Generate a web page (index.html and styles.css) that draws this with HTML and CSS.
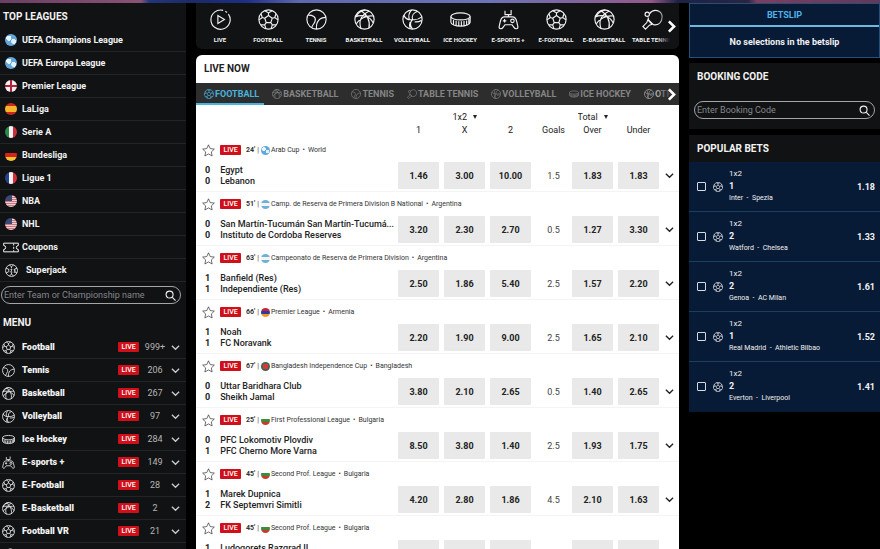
FILE: index.html
```html
<!doctype html>
<html lang="en">
<head>
	<meta charset="UTF-8">
	<meta name="viewport" content="width=device-width, initial-scale=1">
	<title>Live betting</title>
	<link rel="stylesheet" href="styles.css">
</head>
<body>
	<!-- icon set -->
	<svg class="sprite" aria-hidden="true">
		<symbol id="i-play" viewBox="0 0 24 24"><path d="M15 1.600a11 11 0 1 0 6 4.200M17.500 2.500a11 11 0 0 1 2 1.500"/><path d="M9 7.500v9l7.500-4.500z"/></symbol>
		<symbol id="i-football" viewBox="0 0 24 24"><circle cx="12" cy="12" r="11"/><path d="M12 7.500l4.300 3.100-1.700 5H9.400l-1.700-5zM12 7.500v-3M16.300 10.600l2.800-.9M14.600 15.600l1.800 2.500M9.400 15.600l-1.800 2.500M7.700 10.600l-2.800-.9M8 2l4 2.500L16 2M20.600 5.500l-1.500 4.200 3.700 2.700M20.800 18.200l-4.400-.1-1.500 4.300M9.100 22.400l-1.500-4.300-4.400.1M1.200 12.400l3.700-2.700-1.500-4.200"/></symbol>
		<symbol id="i-tennis" viewBox="0 0 24 24"><circle cx="12" cy="12" r="11"/><path d="M2.500 7C8 7 11.500 9 10.500 13.500 9.800 17 7 18 6.500 21.500M22.800 9.500C16 9.500 11 14 12 23"/></symbol>
		<symbol id="i-basketball" viewBox="0 0 24 24"><circle cx="12" cy="12" r="11"/><path d="M1.500 9C9 6 18 8 22 16M8 2c7 4 11 12 9 20M17 2.500C8 7 5 14 8 22.300M2.500 17C6 11 14 7 22 8M13 1c-5 1-9 4-11 8"/></symbol>
		<symbol id="i-volleyball" viewBox="0 0 24 24"><circle cx="12" cy="12" r="11"/><path d="M12 12c-1-4 1-8 6-9.500M12 12c4 1 8-1 10.800-3M12 12c-3 3-3 7 0 11M12 12C8 13 4 11 2 7M8.500 12.500C7 8 8 4 11 1M14.500 14.500c3 1 5 0 8-1.500M9.300 15c-1 2-1 4 0 7.500"/></symbol>
		<symbol id="i-hockey" viewBox="0 0 24 24"><ellipse cx="12" cy="8.500" rx="11" ry="4"/><path d="M1 8.500v6.500c0 2.500 5 4.500 11 4.500s11-2 11-4.500V8.500M4 12.500v5M7 13.500v5M10 14v5M13 14v5M16 13.700v5M19 13v5M21.500 11.500v5.500"/></symbol>
		<symbol id="i-esports" viewBox="0 0 24 24"><path d="M7.500 9h9c3 0 4 1.500 4.800 5l1.400 6c.5 3-3 3.500-4.500 1L16 18H8l-2.200 3c-1.500 2.500-5 2-4.500-1l1.400-6C3.500 10.500 4.500 9 7.500 9zM12 9V6.500H8V2M12 6.500h3V1M7.500 11.500v4M5.500 13.500h4"/><circle cx="16.500" cy="13.500" r="2"/></symbol>
		<symbol id="i-tabletennis" viewBox="0 0 24 24"><path d="M8.500 5.500C13-1 23 1 23 9.500c0 6-4.500 9.500-10 8.500l-5-5M6.500 12.500l5 5-3 1L4 23l-3-3 4.500-4.500zM8 13c-1-1-1-2-.800-3.500"/><circle cx="6" cy="6" r="2.500"/></symbol>
		<symbol id="i-jack" viewBox="0 0 24 24"><circle cx="12" cy="12" r="11"/><path d="M8 2l4 3 4-3M8 22l4-3 4 3M12 5v3M12 16v3M2 8l4 1M22 8l-4 1M2 16l4-1M22 16l-4-1M5.500 10.500L7 9.500v5.500M10 10h3l-2.500 5H13.500M16 10h2.500v2.500H16.500M18.500 12.500V15H16"/></symbol>
		<symbol id="i-ticket" viewBox="0 0 24 16"><path d="M1 1.500h22v3.500a3 3 0 0 0 0 6v3.500H1V11a3 3 0 0 0 0-6zM16 2v3M16 7v3M16 12v2"/></symbol>
		<symbol id="i-star" viewBox="0 0 24 24"><path d="M12 1.500l3.200 7 7.600.9-5.600 5.200 1.500 7.500L12 18.300l-6.700 3.800 1.500-7.500L1.200 9.400l7.600-.9z"/></symbol>
		<symbol id="i-down" viewBox="0 0 10 10"><path d="M1 3l4 4 4-4"/></symbol>
		<symbol id="i-right" viewBox="0 0 10 10"><path d="M3 1l4 4-4 4"/></symbol>
		<symbol id="i-search" viewBox="0 0 12 12"><circle cx="5" cy="5" r="3.800"/><path d="M8 8l3.500 3.500"/></symbol>
	</svg>

	<div class="banner"></div>
	<div class="page">

		<aside class="sidebar">
			<h2>TOP LEAGUES</h2>
			<ul class="leagues">
				<li><a href="#"><i class="flag world"></i>UEFA Champions League</a></li>
				<li><a href="#"><i class="flag world"></i>UEFA Europa League</a></li>
				<li><a href="#"><i class="flag england"></i>Premier League</a></li>
				<li><a href="#"><i class="flag spain"></i>LaLiga</a></li>
				<li><a href="#"><i class="flag italy"></i>Serie A</a></li>
				<li><a href="#"><i class="flag germany"></i>Bundesliga</a></li>
				<li><a href="#"><i class="flag france"></i>Ligue 1</a></li>
				<li><a href="#"><i class="flag usa"></i>NBA</a></li>
				<li><a href="#"><i class="flag usa"></i>NHL</a></li>
				<li class="coupons"><a href="#"><svg class="icon"><use href="#i-ticket"/></svg>Coupons</a></li>
				<li class="superjack"><a href="#"><svg class="icon"><use href="#i-jack"/></svg>Superjack</a></li>
			</ul>
			<form class="search">
				<input type="text" aria-label="Team or championship" placeholder="Enter Team or Championship name">
				<button type="button" aria-label="Search"><svg class="icon"><use href="#i-search"/></svg></button>
			</form>
			<h2 class="menu-title">MENU</h2>
			<ul class="menu">
				<li><a href="#"><svg class="icon"><use href="#i-football"/></svg><b>Football</b><span class="live">LIVE</span><span class="count">999+</span><svg class="down"><use href="#i-down"/></svg></a></li>
				<li><a href="#"><svg class="icon"><use href="#i-tennis"/></svg><b>Tennis</b><span class="live">LIVE</span><span class="count">206</span><svg class="down"><use href="#i-down"/></svg></a></li>
				<li><a href="#"><svg class="icon"><use href="#i-basketball"/></svg><b>Basketball</b><span class="live">LIVE</span><span class="count">267</span><svg class="down"><use href="#i-down"/></svg></a></li>
				<li><a href="#"><svg class="icon"><use href="#i-volleyball"/></svg><b>Volleyball</b><span class="live">LIVE</span><span class="count">97</span><svg class="down"><use href="#i-down"/></svg></a></li>
				<li><a href="#"><svg class="icon"><use href="#i-hockey"/></svg><b>Ice Hockey</b><span class="live">LIVE</span><span class="count">284</span><svg class="down"><use href="#i-down"/></svg></a></li>
				<li><a href="#"><svg class="icon"><use href="#i-esports"/></svg><b>E-sports +</b><span class="live">LIVE</span><span class="count">149</span><svg class="down"><use href="#i-down"/></svg></a></li>
				<li><a href="#"><svg class="icon"><use href="#i-football"/></svg><b>E-Football</b><span class="live">LIVE</span><span class="count">28</span><svg class="down"><use href="#i-down"/></svg></a></li>
				<li><a href="#"><svg class="icon"><use href="#i-basketball"/></svg><b>E-Basketball</b><span class="live">LIVE</span><span class="count">2</span><svg class="down"><use href="#i-down"/></svg></a></li>
				<li><a href="#"><svg class="icon"><use href="#i-football"/></svg><b>Football VR</b><span class="live">LIVE</span><span class="count">21</span><svg class="down"><use href="#i-down"/></svg></a></li>
				<li><a href="#"><svg class="icon"><use href="#i-tabletennis"/></svg><b>Table Tennis</b><span class="live">LIVE</span><span class="count">35</span><svg class="down"><use href="#i-down"/></svg></a></li>
			</ul>
		</aside>

		<main class="center">
			<nav class="sports">
				<a href="#"><svg class="icon"><use href="#i-play"/></svg>LIVE</a>
				<a href="#"><svg class="icon"><use href="#i-football"/></svg>FOOTBALL</a>
				<a href="#"><svg class="icon"><use href="#i-tennis"/></svg>TENNIS</a>
				<a href="#"><svg class="icon"><use href="#i-basketball"/></svg>BASKETBALL</a>
				<a href="#"><svg class="icon"><use href="#i-volleyball"/></svg>VOLLEYBALL</a>
				<a href="#"><svg class="icon"><use href="#i-hockey"/></svg>ICE HOCKEY</a>
				<a href="#"><svg class="icon"><use href="#i-esports"/></svg>E-SPORTS +</a>
				<a href="#"><svg class="icon"><use href="#i-football"/></svg>E-FOOTBALL</a>
				<a href="#"><svg class="icon"><use href="#i-basketball"/></svg>E-BASKETBALL</a>
				<a href="#"><svg class="icon"><use href="#i-tabletennis"/></svg>TABLE TENNIS</a>
				<button type="button" class="next" aria-label="More sports"><svg><use href="#i-right"/></svg></button>
			</nav>

			<section class="board">
				<h1>LIVE NOW</h1>
				<nav class="tabs">
					<a href="#" class="active"><svg class="icon"><use href="#i-football"/></svg>FOOTBALL</a>
					<a href="#"><svg class="icon"><use href="#i-basketball"/></svg>BASKETBALL</a>
					<a href="#"><svg class="icon"><use href="#i-tennis"/></svg>TENNIS</a>
					<a href="#"><svg class="icon"><use href="#i-tabletennis"/></svg>TABLE TENNIS</a>
					<a href="#"><svg class="icon"><use href="#i-volleyball"/></svg>VOLLEYBALL</a>
					<a href="#"><svg class="icon"><use href="#i-hockey"/></svg>ICE HOCKEY</a>
					<a href="#" class="others"><svg class="icon"><use href="#i-volleyball"/></svg>OTHERS</a>
					<button type="button" class="next" aria-label="More tabs"><svg><use href="#i-right"/></svg></button>
				</nav>

				<div class="heads">
					<label class="pick main-pick"><select aria-label="Main market"><option>1x2</option></select></label>
					<label class="pick total-pick"><select aria-label="Goals market"><option>Total</option></select></label>
					<span></span><span>1</span><span>X</span><span>2</span><span class="goals">Goals</span><span>Over</span><span>Under</span>
				</div>

				<article class="match">
					<div class="info"><svg class="star"><use href="#i-star"/></svg><span class="live">LIVE</span><b>24'</b><span class="bar">|</span><i class="flag world"></i><span>Arab Cup</span><span class="dot">•</span><span>World</span></div>
					<div class="teams"><p><b>0</b><span>Egypt</span></p><p><b>0</b><span>Lebanon</span></p></div>
					<button type="button">1.46</button><button type="button">3.00</button><button type="button">10.00</button><span class="goals">1.5</span><button type="button">1.83</button><button type="button">1.83</button>
					<svg class="down"><use href="#i-down"/></svg>
				</article>
				<article class="match">
					<div class="info"><svg class="star"><use href="#i-star"/></svg><span class="live">LIVE</span><b>51'</b><span class="bar">|</span><i class="flag argentina"></i><span>Camp. de Reserva de Primera Division B National</span><span class="dot">•</span><span>Argentina</span></div>
					<div class="teams"><p><b>0</b><span>San Martín-Tucumán San Martín-Tucumá...</span></p><p><b>0</b><span>Instituto de Cordoba Reserves</span></p></div>
					<button type="button">3.20</button><button type="button">2.30</button><button type="button">2.70</button><span class="goals">0.5</span><button type="button">1.27</button><button type="button">3.30</button>
					<svg class="down"><use href="#i-down"/></svg>
				</article>
				<article class="match">
					<div class="info"><svg class="star"><use href="#i-star"/></svg><span class="live">LIVE</span><b>63'</b><span class="bar">|</span><i class="flag argentina"></i><span>Campeonato de Reserva de Primera Division</span><span class="dot">•</span><span>Argentina</span></div>
					<div class="teams"><p><b>1</b><span>Banfield (Res)</span></p><p><b>1</b><span>Independiente (Res)</span></p></div>
					<button type="button">2.50</button><button type="button">1.86</button><button type="button">5.40</button><span class="goals">2.5</span><button type="button">1.57</button><button type="button">2.20</button>
					<svg class="down"><use href="#i-down"/></svg>
				</article>
				<article class="match">
					<div class="info"><svg class="star"><use href="#i-star"/></svg><span class="live">LIVE</span><b>66'</b><span class="bar">|</span><i class="flag armenia"></i><span>Premier League</span><span class="dot">•</span><span>Armenia</span></div>
					<div class="teams"><p><b>1</b><span>Noah</span></p><p><b>1</b><span>FC Noravank</span></p></div>
					<button type="button">2.20</button><button type="button">1.90</button><button type="button">9.00</button><span class="goals">2.5</span><button type="button">1.65</button><button type="button">2.10</button>
					<svg class="down"><use href="#i-down"/></svg>
				</article>
				<article class="match">
					<div class="info"><svg class="star"><use href="#i-star"/></svg><span class="live">LIVE</span><b>67'</b><span class="bar">|</span><i class="flag bangladesh"></i><span>Bangladesh Independence Cup</span><span class="dot">•</span><span>Bangladesh</span></div>
					<div class="teams"><p><b>0</b><span>Uttar Baridhara Club</span></p><p><b>0</b><span>Sheikh Jamal</span></p></div>
					<button type="button">3.80</button><button type="button">2.10</button><button type="button">2.65</button><span class="goals">0.5</span><button type="button">1.40</button><button type="button">2.65</button>
					<svg class="down"><use href="#i-down"/></svg>
				</article>
				<article class="match">
					<div class="info"><svg class="star"><use href="#i-star"/></svg><span class="live">LIVE</span><b>25'</b><span class="bar">|</span><i class="flag bulgaria"></i><span>First Professional League</span><span class="dot">•</span><span>Bulgaria</span></div>
					<div class="teams"><p><b>0</b><span>PFC Lokomotiv Plovdiv</span></p><p><b>1</b><span>PFC Cherno More Varna</span></p></div>
					<button type="button">8.50</button><button type="button">3.80</button><button type="button">1.40</button><span class="goals">2.5</span><button type="button">1.93</button><button type="button">1.75</button>
					<svg class="down"><use href="#i-down"/></svg>
				</article>
				<article class="match">
					<div class="info"><svg class="star"><use href="#i-star"/></svg><span class="live">LIVE</span><b>45'</b><span class="bar">|</span><i class="flag bulgaria"></i><span>Second Prof. League</span><span class="dot">•</span><span>Bulgaria</span></div>
					<div class="teams"><p><b>1</b><span>Marek Dupnica</span></p><p><b>2</b><span>FK Septemvri Simitli</span></p></div>
					<button type="button">4.20</button><button type="button">2.80</button><button type="button">1.86</button><span class="goals">4.5</span><button type="button">2.10</button><button type="button">1.63</button>
					<svg class="down"><use href="#i-down"/></svg>
				</article>
				<article class="match">
					<div class="info"><svg class="star"><use href="#i-star"/></svg><span class="live">LIVE</span><b>45'</b><span class="bar">|</span><i class="flag bulgaria"></i><span>Second Prof. League</span><span class="dot">•</span><span>Bulgaria</span></div>
					<div class="teams"><p><b>1</b><span>Ludogorets Razgrad II</span></p><p><b>1</b><span>Litex</span></p></div>
					<button type="button">3.10</button><button type="button">2.25</button><button type="button">2.45</button><span class="goals">2.5</span><button type="button">2.00</button><button type="button">1.77</button>
					<svg class="down"><use href="#i-down"/></svg>
				</article>
			</section>
		</main>

		<aside class="right">
			<section class="betslip">
				<h2>BETSLIP</h2>
				<p>No selections in the betslip</p>
			</section>
			<section class="booking">
				<h2>BOOKING CODE</h2>
				<form class="search">
					<input type="text" aria-label="Booking code" placeholder="Enter Booking Code">
					<button type="button" aria-label="Search"><svg class="icon"><use href="#i-search"/></svg></button>
				</form>
			</section>
			<section class="popular">
				<h2>POPULAR BETS</h2>
				<label class="bet"><input type="checkbox"><svg class="icon"><use href="#i-football"/></svg><span class="what"><span>1x2</span><b>1</b><small>Inter &nbsp;-&nbsp; Spezia</small></span><strong>1.18</strong></label>
				<label class="bet"><input type="checkbox"><svg class="icon"><use href="#i-football"/></svg><span class="what"><span>1x2</span><b>2</b><small>Watford &nbsp;-&nbsp; Chelsea</small></span><strong>1.33</strong></label>
				<label class="bet"><input type="checkbox"><svg class="icon"><use href="#i-football"/></svg><span class="what"><span>1x2</span><b>2</b><small>Genoa &nbsp;-&nbsp; AC Milan</small></span><strong>1.61</strong></label>
				<label class="bet"><input type="checkbox"><svg class="icon"><use href="#i-football"/></svg><span class="what"><span>1x2</span><b>1</b><small>Real Madrid &nbsp;-&nbsp; Athletic Bilbao</small></span><strong>1.52</strong></label>
				<label class="bet"><input type="checkbox"><svg class="icon"><use href="#i-football"/></svg><span class="what"><span>1x2</span><b>2</b><small>Everton &nbsp;-&nbsp; Liverpool</small></span><strong>1.41</strong></label>
			</section>
		</aside>
	</div>
</body>
</html>
```
FILE: styles.css
```css
*{box-sizing:border-box;}
body{margin:0; height:100vh; overflow:hidden; display:flex; flex-direction:column; background:#000; color:#f2f2f2; font:9px/12px Roboto,"Liberation Sans",sans-serif;}
h1,h2,p,ul,form{margin:0; padding:0; list-style:none;}
h1,h2{font-size:10px; line-height:14px; font-weight:700;}
a{color:inherit; text-decoration:none;}
button,input,select{font:inherit; color:inherit; border:0; padding:0; margin:0; background:none;}
button{cursor:pointer;}
svg{fill:none; stroke:currentColor; stroke-width:2; flex:none; display:block;}
.sprite{position:absolute; width:0; height:0;}

.banner{flex:none; height:3px; background:linear-gradient(90deg,#6b3f63 0,#8a5275 16%,#22357c 17%,#1c2a66 22%,#1d2f86 28%,#5f68ae 34%,#6b74b8 55%,#94588a 74%,#1d2347 77%,#2b2440 85%,#7b3f60 86%,#63385a 100%);}
.page{flex:1; min-height:0; display:grid; grid-template-columns:186px minmax(0,1fr) 191px; overflow:hidden;}

/* small shared parts */
.icon{width:13px; height:13px; stroke-width:1.500;}
.down{width:9px; height:9px; stroke-width:1.500;}
.live{background:#cf101b; color:#fff; border-radius:1px; font-size:7px; line-height:10px; height:10px; width:21px; text-align:center; font-weight:500; flex:none;}
.flag{width:12px; height:12px; border-radius:50%; flex:none; background:#ccc;}
.world{background:radial-gradient(circle at 32% 35%,#eaf4fb 0 22%,transparent 24%),radial-gradient(circle at 72% 62%,#e3f0f9 0 20%,transparent 22%),#62a8dc;}
.england{background:linear-gradient(90deg,transparent 40%,#b5213c 40% 60%,transparent 60%),linear-gradient(#f1eff0 40%,#b5213c 40% 60%,#f1eff0 60%);}
.spain{background:linear-gradient(#c8281f 26%,#f5b52a 26% 74%,#c8281f 74%);}
.italy{background:linear-gradient(90deg,#2b8a4a 33%,#f3f3f3 33% 66%,#c5303c 66%);}
.germany{background:linear-gradient(#111 33%,#d3231c 33% 66%,#f7c331 66%);}
.france{background:linear-gradient(90deg,#27408f 33%,#f3f3f3 33% 66%,#d42e3f 66%);}
.usa{background:linear-gradient(#3a4a78,#3a4a78) 0 0/60% 50% no-repeat,repeating-linear-gradient(#d2737c 0 1px,#e8d5d8 1px 2px);}
.argentina{background:linear-gradient(#6fb0d8 33%,#f4f4f4 33% 66%,#6fb0d8 66%);}
.armenia{background:linear-gradient(#cc2033 33%,#2a3ba5 33% 66%,#ee9a2a 66%);}
.bangladesh{background:radial-gradient(circle,#d8393c 45%,#2f6a50 50%);}
.bulgaria{background:linear-gradient(#fff 33%,#3f8a3c 33% 66%,#c93a2c 66%);}

/* left column */
.sidebar{background:#111214; overflow:hidden;}
.sidebar h2{padding:7px 3px 5px;}
.leagues a,.menu a{display:flex; align-items:center; height:23px; border-bottom:1px solid #222427; font-weight:700;}
.leagues a{padding-left:5px; gap:5px;}
.leagues .coupons a{padding-left:3px; gap:3px;}
.coupons .icon{width:16px; height:11px;}
.leagues .superjack a{gap:8px;}
.search{display:flex; align-items:center; height:18px; border:1px solid #a5a5a5; border-radius:9px; padding:0 4px 0 2px;}
.search input{flex:1; min-width:0; outline:0;}
.search input::placeholder{color:#85878a; opacity:1;}
.search .icon{width:11px; height:11px; stroke-width:1.200;}
.sidebar .search{margin:4px 5px 0 1px;}
.sidebar .menu-title{padding:12px 3px 6px;}
.menu a{padding:0 6px 0 2px;}
.menu b{flex:1; margin-left:7px;}
.menu .count{width:32px; text-align:center; font-weight:400; color:#b5b5b5;}
.menu .down{color:#c9c9c9;}

/* middle column */
.center{margin:0 10px; overflow:hidden;}
.sports{display:flex; height:46px; background:#111214; border-radius:0 0 6px 6px; overflow:hidden; position:relative;}
.sports a{flex:none; width:48px; display:flex; flex-direction:column; align-items:center; padding-top:6px; gap:6px; font-size:6px; line-height:8px; font-weight:700; white-space:nowrap;}
.sports .icon{width:21px; height:21px; stroke-width:1.300;}
.next{position:absolute; right:0; top:0; bottom:0; width:22px; display:flex; align-items:center; justify-content:center; color:#fff;}
.next svg{width:13px; height:13px;}
.sports .next{background:linear-gradient(90deg,transparent,#111214 60%); padding-left:6px;}
.board{margin-top:6px; background:#fff; color:#222; border-radius:6px 6px 0 0; overflow:hidden;}
.board h1{padding:7px 8px;}
.tabs{display:flex; height:22px; background:#2d2d2e; color:#858585; position:relative; overflow:hidden;}
.tabs a{flex:none; display:flex; align-items:center; gap:1px; padding:2px 5px 0 8px; font-weight:700; border-bottom:2px solid transparent;}
.tabs .icon{width:10px; height:10px;}
.tabs .active{color:#48b4dd; border-color:#48b4dd;}
.tabs .others{color:#aaa;}
.tabs .next{background:linear-gradient(90deg,transparent,#2d2d2e 70%); padding-left:6px;}

.heads,.match{display:grid; grid-template-columns:minmax(0,1fr) 41px 41px 41px 31px 41px 41px 11px; column-gap:5px; padding:0 4px 0 6px; align-items:center; justify-items:center;}
.heads{grid-template-rows:14px 12px; height:33px; padding-top:5px;}
.heads span{grid-row:2;}
.pick{display:flex; align-items:center; gap:5px; grid-row:1;}
.pick select{appearance:none; outline:0;}
.pick::after{content:""; border:2px solid transparent; border-top:4px solid #222; border-bottom:0;}
.main-pick{grid-column:3;}
.total-pick{grid-column:6;}
.goals{padding-left:4px;}
.match{grid-template-rows:24px 27px; height:54px; border-bottom:1px solid #f4f4f4;}
.info{grid-column:1/-1; justify-self:stretch; display:flex; align-items:center; font-size:7px; line-height:10px; white-space:nowrap; color:#333;}
.star{width:13px; height:13px; stroke-width:1.300; margin-right:5px;}
.info b{margin-left:5px; font-weight:700;}
.info .bar{margin:0 2px;}
.info .flag{width:9px; height:9px; margin-right:1px;}
.info .dot{margin:0 3px;}
.teams{justify-self:stretch; line-height:11px; font-weight:500;}
.teams p{display:flex; gap:10px; padding-left:3px; white-space:nowrap;}
.match button{width:41px; height:27px; background:#e9e9e9; border-radius:1px; font-weight:700;}
.match .goals{color:#444;}

/* right column */
.right{overflow:hidden;}
.betslip{background:#071a36; border:1px solid #24507a; text-align:center; height:55px;}
.betslip h2{font-size:9px; line-height:20px; padding-top:1px; color:#4fb3e8; border-bottom:2px solid #6cb9e2;}
.betslip p{line-height:30px; font-weight:700;}
.booking{margin-top:5px; background:#111214; padding:7px 5px 10px;}
.booking h2{padding:0 3px 17px;}
.popular{margin-top:6px; background:#111214;}
.popular h2{padding:7px 8px 6px;}
.bet{display:flex; align-items:center; height:50px; padding:0 5px 0 8px; background:#071a36; border-bottom:1px solid #1b3f5e;}
.bet:last-child{border-bottom-color:transparent;}
.bet input{appearance:none; width:9px; height:9px; border:1px solid #d5dbe3; border-radius:1px;}
.bet .icon{width:10px; height:10px; margin:0 6px 0 7px;}
.what{flex:1; display:flex; flex-direction:column; font-size:8px;}
.what b{font-size:9px;}
.what small{font-size:7px; line-height:13px;}
```
